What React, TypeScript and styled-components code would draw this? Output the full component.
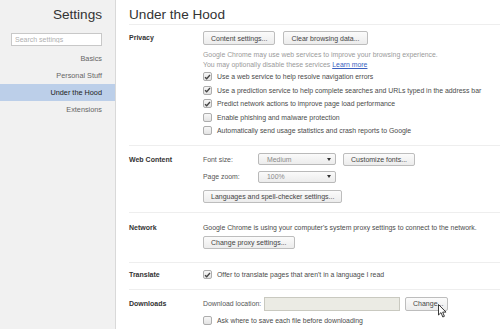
import React from "react";
import styled, { createGlobalStyle } from "styled-components";

const Global = createGlobalStyle`
  html, body { margin: 0; padding: 0; background: #fff; overflow: hidden; }
  body { font-family: "Liberation Sans", Arial, sans-serif; }
  * { box-sizing: border-box; }
`;

const Page = styled.div`
  display: flex;
  width: 500px;
  height: 329px;
  overflow: hidden;
`;

const Sidebar = styled.nav`
  width: 116px;
  flex: none;
  background: #f1f1f1;
  border-right: 1px solid #d9d9d9;
  display: flex;
  flex-direction: column;
`;

const SideTitle = styled.h1`
  margin: 0;
  padding: 8px 13px 0 0;
  font-size: 13.6px;
  line-height: 14px;
  font-weight: normal;
  color: #333;
  text-align: right;
`;

const Search = styled.input`
  margin: 11px 13px 4px 11px;
  height: 13px;
  width: 91px;
  border: 1px solid #c8c8c8;
  background: #fff;
  padding: 0 3px;
  font-family: inherit;
  font-size: 7px;
  color: #333;
  outline: none;
  &::placeholder { color: #b0b0b0; }
`;

const NavItem = styled.div<{ $active?: boolean }>`
  height: 17px;
  line-height: 17px;
  padding-right: 13px;
  text-align: right;
  font-size: 7.3px;
  color: ${(p) => (p.$active ? "#222" : "#666")};
  background: ${(p) => (p.$active ? "#bccfe9" : "transparent")};
`;

const Main = styled.main`
  flex: 1;
  padding-left: 13px;
  display: flex;
  flex-direction: column;
`;

const Title = styled.h2`
  margin: 0;
  padding-top: 8px;
  height: 25px;
  font-size: 13.6px;
  line-height: 14px;
  font-weight: normal;
  color: #333;
  border-bottom: 1px solid #eeeeee;
`;

const Section = styled.section<{ $top: number; $bottom: number; $last?: boolean }>`
  display: flex;
  align-items: flex-start;
  padding-top: ${(p) => p.$top}px;
  padding-bottom: ${(p) => p.$bottom}px;
  border-bottom: ${(p) => (p.$last ? "none" : "1px solid #eeeeee")};
`;

const Label = styled.div<{ $lh: number }>`
  width: 74px;
  flex: none;
  font-size: 7px;
  font-weight: bold;
  color: #333;
  line-height: ${(p) => p.$lh}px;
`;

const Content = styled.div`
  display: flex;
  flex-direction: column;
  font-size: 6.9px;
  color: #4a4a4a;
`;

const Row = styled.div<{ $h: number; $mt?: number; $gap?: number }>`
  display: flex;
  align-items: center;
  height: ${(p) => p.$h}px;
  margin-top: ${(p) => p.$mt ?? 0}px;
  gap: ${(p) => p.$gap ?? 0}px;
  white-space: nowrap;
`;

const Button = styled.button<{ $w?: number; $ml?: number }>`
  height: 100%;
  width: ${(p) => (p.$w ? `${p.$w}px` : "auto")};
  margin-left: ${(p) => p.$ml ?? 0}px;
  padding: 0 7px;
  border: 1px solid #bdbdbd;
  border-radius: 2px;
  background: linear-gradient(#fbfbfb, #ececec);
  font-family: inherit;
  font-size: 7px;
  color: #444;
  cursor: default;
  white-space: nowrap;
`;

const Desc = styled.div<{ $mt?: number }>`
  line-height: 10px;
  color: #9a9a9a;
  margin-top: ${(p) => p.$mt ?? 0}px;
`;

const Link = styled.a`
  color: #3a5fbf;
  text-decoration: underline;
`;

const Box = styled.span`
  width: 9px;
  height: 9px;
  flex: none;
  margin-right: 5px;
  border: 1px solid #adadad;
  border-radius: 2px;
  background: linear-gradient(#f7f7f7, #e3e3e3);
  display: flex;
  align-items: center;
  justify-content: center;
`;

const FieldLabel = styled.span<{ $w: number }>`
  width: ${(p) => p.$w}px;
  flex: none;
  color: #555;
`;

const Select = styled.div`
  width: 78px;
  height: 12px;
  border: 1px solid #b9b9b9;
  border-radius: 2px;
  background: linear-gradient(#fafafa, #ececec);
  display: flex;
  align-items: center;
  justify-content: space-between;
  padding: 0 4px 0 8px;
  color: #8a8a8a;
`;

const Arrow = styled.span`
  width: 0;
  height: 0;
  border-left: 2.5px solid transparent;
  border-right: 2.5px solid transparent;
  border-top: 3px solid #333;
`;

const Field = styled.div`
  width: 136px;
  height: 100%;
  border: 1px solid #c9c9c0;
  background: #ebebe4;
`;

const CursorWrap = styled.div`
  position: relative;
  height: 100%;
`;

const Cursor = styled.svg`
  position: absolute;
  left: 38px;
  top: 7px;
  pointer-events: none;
`;

function Check({ checked, children }: { checked?: boolean; children: React.ReactNode }) {
  return (
    <>
      <Box>
        {checked && (
          <svg width="7" height="6" viewBox="0 0 7 6">
            <path d="M1 3.2 L2.7 4.8 L6 1" fill="none" stroke="#444" strokeWidth="1.3" />
          </svg>
        )}
      </Box>
      <span>{children}</span>
    </>
  );
}

export default function App() {
  return (
    <>
      <Global />
      <Page>
        <Sidebar>
          <SideTitle>Settings</SideTitle>
          <Search placeholder="Search settings" />
          <NavItem>Basics</NavItem>
          <NavItem>Personal Stuff</NavItem>
          <NavItem $active>Under the Hood</NavItem>
          <NavItem>Extensions</NavItem>
        </Sidebar>
        <Main>
          <Title>Under the Hood</Title>

          <Section $top={6} $bottom={7}>
            <Label $lh={14}>Privacy</Label>
            <Content>
              <Row $h={14} $gap={8}>
                <Button>Content settings...</Button>
                <Button>Clear browsing data...</Button>
              </Row>
              <Desc $mt={5}>Google Chrome may use web services to improve your browsing experience.</Desc>
              <Desc>
                You may optionally disable these services <Link>Learn more</Link>
              </Desc>
              <Row $h={13.5}>
                <Check checked>Use a web service to help resolve navigation errors</Check>
              </Row>
              <Row $h={13.5}>
                <Check checked>Use a prediction service to help complete searches and URLs typed in the address bar</Check>
              </Row>
              <Row $h={13.5}>
                <Check checked>Predict network actions to improve page load performance</Check>
              </Row>
              <Row $h={13.5}>
                <Check>Enable phishing and malware protection</Check>
              </Row>
              <Row $h={13.5}>
                <Check>Automatically send usage statistics and crash reports to Google</Check>
              </Row>
            </Content>
          </Section>

          <Section $top={7} $bottom={9}>
            <Label $lh={13}>Web Content</Label>
            <Content>
              <Row $h={13}>
                <FieldLabel $w={55}>Font size:</FieldLabel>
                <Select>
                  <span>Medium</span>
                  <Arrow />
                </Select>
                <Button $ml={7}>Customize fonts...</Button>
              </Row>
              <Row $h={12} $mt={5}>
                <FieldLabel $w={55}>Page zoom:</FieldLabel>
                <Select>
                  <span>100%</span>
                  <Arrow />
                </Select>
              </Row>
              <Row $h={13} $mt={7}>
                <Button>Languages and spell-checker settings...</Button>
              </Row>
            </Content>
          </Section>

          <Section $top={10} $bottom={13}>
            <Label $lh={10}>Network</Label>
            <Content>
              <Row $h={10}>Google Chrome is using your computer's system proxy settings to connect to the network.</Row>
              <Row $h={13} $mt={3}>
                <Button>Change proxy settings...</Button>
              </Row>
            </Content>
          </Section>

          <Section $top={6} $bottom={8}>
            <Label $lh={12}>Translate</Label>
            <Content>
              <Row $h={12}>
                <Check checked>Offer to translate pages that aren't in a language I read</Check>
              </Row>
            </Content>
          </Section>

          <Section $top={7} $bottom={0} $last>
            <Label $lh={14}>Downloads</Label>
            <Content>
              <Row $h={14}>
                <FieldLabel $w={61}>Download location:</FieldLabel>
                <Field />
                <CursorWrap>
                  <Button $ml={5} $w={43}>Change...</Button>
                  <Cursor width="10" height="15" viewBox="0 0 10 15">
                    <path d="M0.5 0.5 L0.5 11 L3 8.6 L4.8 13 L6.4 12.3 L4.7 8.1 L8 8.1 Z" fill="#fff" stroke="#222" strokeWidth="0.9" strokeLinejoin="round" />
                  </Cursor>
                </CursorWrap>
              </Row>
              <Row $h={12} $mt={4}>
                <Check>Ask where to save each file before downloading</Check>
              </Row>
            </Content>
          </Section>
        </Main>
      </Page>
    </>
  );
}
